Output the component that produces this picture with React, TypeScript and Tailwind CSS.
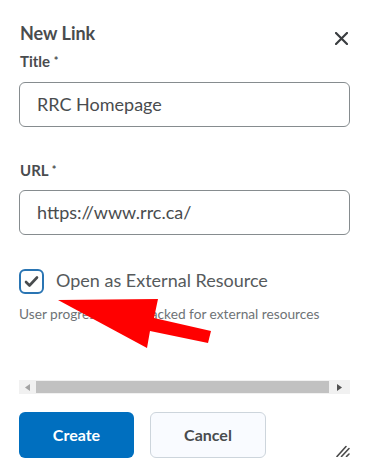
import React from "react";

export default function App() {
  return (
    <div
      className="relative w-[375px] h-[474px] bg-white overflow-hidden text-[#494c4e]"
      style={{ fontFamily: "Lato, 'Noto Sans', sans-serif" }}
    >
      <div className="flex flex-col px-[19px] pt-[24px] w-[375px]">
        <div className="flex justify-between h-[18px] w-[331px]">
          <div className="text-[18px] leading-[18px] font-bold pl-[1px]">New Link</div>
          <svg width="13" height="13" viewBox="0 0 13 13" className="mt-[8px] mr-[2px]">
            <path d="M1 1 L12 12 M12 1 L1 12" stroke="#3a3d40" strokeWidth="2.2" strokeLinecap="round" />
          </svg>
        </div>

        <div className="mt-[12px] text-[15px] leading-[15px] font-bold pl-[1px]">
          Title <span className="text-[11px] align-top relative top-[-1px]">*</span>
        </div>
        <div className="mt-[13px] h-[45px] w-[331px] rounded-[6px] border border-[#868c8f] flex items-center pl-[17px] text-[18px] text-[#494c4e]">
          RRC Homepage
        </div>

        <div className="mt-[36px] text-[15px] leading-[15px] font-bold pl-[1px]">
          URL <span className="text-[11px] align-top relative top-[-1px]">*</span>
        </div>
        <div className="mt-[12px] h-[45px] w-[331px] rounded-[6px] border border-[#868c8f] flex items-center pl-[17px] text-[18px] text-[#494c4e]">
          https://www.rrc.ca/
        </div>

        <div className="mt-[34px] flex items-center h-[25px]">
          <div className="w-[25px] h-[25px] rounded-[6px] border-2 border-[#2a75b3] flex items-center justify-center bg-white">
            <svg width="15" height="13" viewBox="0 0 15 13">
              <path d="M2 7 L5.5 10.5 L13 2.5" fill="none" stroke="#494c4e" strokeWidth="2.6" strokeLinecap="round" strokeLinejoin="round" />
            </svg>
          </div>
          <div className="ml-[12px] text-[18px] leading-[18px] text-[#565a5c] -mt-[3px]">Open as External Resource</div>
        </div>

        <div className="mt-[13px] text-[13.7px] leading-[14px] text-[#6e7376]">
          User progress is not tracked for external resources
        </div>

        <div className="mt-[59px] h-[14px] w-[331px] bg-[#f1f1f1] flex items-center">
          <div className="w-[17px] h-[14px] flex items-center justify-center">
            <svg width="5" height="7" viewBox="0 0 5 7">
              <path d="M5 0 L0 3.5 L5 7 Z" fill="#a3a3a3" />
            </svg>
          </div>
          <div className="h-[12px] flex-1 bg-[#c1c1c1]" />
          <div className="w-[21px] h-[14px] flex items-center justify-center">
            <svg width="5" height="7" viewBox="0 0 5 7">
              <path d="M0 0 L5 3.5 L0 7 Z" fill="#505050" />
            </svg>
          </div>
        </div>

        <div className="mt-[18px] flex w-[331px]">
          <div className="w-[115px] h-[46px] rounded-[6px] bg-[#006fbf] text-white font-bold text-[16px] flex items-center justify-center">
            Create
          </div>
          <div className="ml-[16px] w-[116px] h-[46px] rounded-[6px] bg-[#f9fbff] border border-[#cdd5dc] text-[#494c4e] font-bold text-[16px] flex items-center justify-center">
            Cancel
          </div>
          <div className="ml-auto self-end mb-[1px]">
            <svg width="14" height="12" viewBox="0 0 14 12">
              <path d="M1 11.5 L10 1.5 M5.5 11.5 L13 3.5 M10.5 11.5 L13 9" stroke="#4a4a4a" strokeWidth="1.6" strokeLinecap="round" />
            </svg>
          </div>
        </div>
      </div>

      <svg className="absolute left-0 top-0 pointer-events-none" width="375" height="474" viewBox="0 0 375 474">
        <polygon
          points="58,300 158,299 154,318 211,331 208,343 150,331 147,348"
          fill="#ff0000"
        />
      </svg>
    </div>
  );
}
